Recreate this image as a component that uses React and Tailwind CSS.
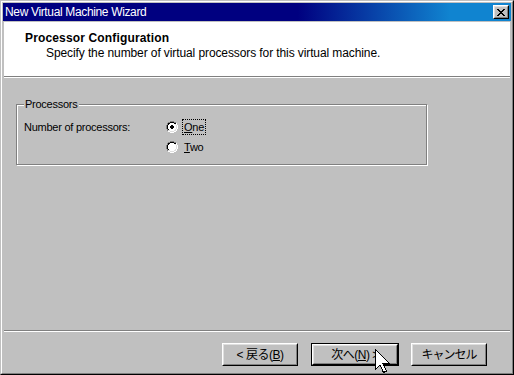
import React from "react";

function Pix({ rows, map, className = "" }) {
  const h = rows.length;
  const w = rows[0].length;
  const rects = [];
  for (let y = 0; y < h; y++) {
    for (let x = 0; x < w; x++) {
      const c = map[rows[y][x]];
      if (c) rects.push(<rect key={x + "-" + y} x={x} y={y} width={1} height={1} fill={c} />);
    }
  }
  return (
    <svg width={w} height={h} viewBox={`0 0 ${w} ${h}`} shapeRendering="crispEdges" className={className}>
      {rects}
    </svg>
  );
}

const RADIO_OFF = [
  "....GGGG....",
  "..GGKKKKGG..",
  ".GKKwwwwKKW.",
  ".GKwwwwwwLW.",
  "GKwwwwwwwwLW",
  "GKwwwwwwwwLW",
  "GKwwwwwwwwLW",
  "GKwwwwwwwwLW",
  ".GKwwwwwwLW.",
  ".GLLwwwwLLW.",
  "..WWLLLLWW..",
  "....WWWW....",
];
const RADIO_ON = [
  "....GGGG....",
  "..GGKKKKGG..",
  ".GKKwwwwKKW.",
  ".GKwwwwwwLW.",
  "GKwwwKKwwwLW",
  "GKwwKKKKwwLW",
  "GKwwKKKKwwLW",
  "GKwwwKKwwwLW",
  ".GKwwwwwwLW.",
  ".GLLwwwwLLW.",
  "..WWLLLLWW..",
  "....WWWW....",
];
const RADIO_MAP = { G: "#808080", K: "#000000", W: "#ffffff", L: "#dfdfdf", w: "#ffffff" };

const CLOSE_X = [
  "KK....KK",
  ".KK..KK.",
  "..KKKK..",
  "...KK...",
  "..KKKK..",
  ".KK..KK.",
  "KK....KK",
];

function Raised({ className = "", children }) {
  return (
    <div className={"border border-t-white border-l-white border-r-black border-b-black " + className}>
      <div className="h-full w-full border border-t-[#dfdfdf] border-l-[#dfdfdf] border-r-[#808080] border-b-[#808080] flex items-center justify-center">
        {children}
      </div>
    </div>
  );
}

function Btn({ children, def, className = "" }) {
  if (def) {
    return (
      <div className={"border border-black " + className}>
        <Raised className="h-full w-full">{children}</Raised>
      </div>
    );
  }
  return <Raised className={className}>{children}</Raised>;
}

function Etched() {
  return <div className="h-[2px] shrink-0 border-t border-t-[#808080] border-b border-b-white" />;
}

export default function App() {
  return (
    <div className="relative w-[514px] h-[375px] overflow-hidden bg-[#c0c0c0] [font-family:'Liberation_Sans','Noto_Sans_CJK_JP',Arial,sans-serif] text-black">
      <div className="h-full w-full border border-t-[#c0c0c0] border-l-[#c0c0c0] border-r-black border-b-black">
        <div className="h-full w-full border border-t-white border-l-white border-r-[#808080] border-b-[#808080] p-[1px] flex flex-col">
          {/* Title bar */}
          <div className="h-[18px] shrink-0 flex items-center justify-between pl-[2px] pr-[2px] bg-[linear-gradient(90deg,#000080_0%,#000080_58%,#1084d0_88%,#1084d0_100%)]">
            <span className="text-white text-[12px] leading-[18px] tracking-[-0.35px] whitespace-nowrap">
              New Virtual Machine Wizard
            </span>
            <Raised className="w-[16px] h-[14px] bg-[#c0c0c0]">
              <Pix rows={CLOSE_X} map={{ K: "#000" }} />
            </Raised>
          </div>

          {/* Client area */}
          <div className="flex-1 mx-[1px] mt-[1px] flex flex-col">
            {/* Header */}
            <div className="h-[54px] shrink-0 bg-white pt-[9px] pl-[21px]">
              <div className="text-[12px] leading-[14px] font-bold tracking-[0.15px] whitespace-nowrap">
                Processor Configuration
              </div>
              <div className="text-[12px] leading-[14px] pl-[21px] mt-[1px] tracking-[-0.1px] whitespace-nowrap">
                Specify the number of virtual processors for this virtual machine.
              </div>
            </div>
            <Etched />

            {/* Body */}
            <div className="flex-1 pt-[26px] pl-[12px]">
              <div className="relative w-[411px] h-[61px] border border-[#808080] shadow-[inset_1px_1px_0_#fff,1px_1px_0_#fff] pt-[15px] pl-[7px]">
                <span className="absolute -top-[8px] left-[7px] bg-[#c0c0c0] px-[1px] text-[11px] leading-[14px] tracking-[-0.25px] whitespace-nowrap">
                  Processors
                </span>
                <div className="flex text-[11px] leading-[14px] tracking-[-0.25px]">
                  <div className="w-[142px] shrink-0 whitespace-nowrap">Number of processors:</div>
                  <div className="flex flex-col gap-[6px]">
                    <div className="h-[14px] flex items-center">
                      <Pix rows={RADIO_ON} map={RADIO_MAP} />
                      <span className="ml-[4px] h-[16px] leading-[14px] border border-dotted border-black px-[1px]">
                        <span className="underline">O</span>ne
                      </span>
                    </div>
                    <div className="h-[14px] flex items-center">
                      <Pix rows={RADIO_OFF} map={RADIO_MAP} />
                      <span className="ml-[5px] h-[14px] leading-[14px] px-[1px]">
                        <span className="underline">T</span>wo
                      </span>
                    </div>
                  </div>
                </div>
              </div>
            </div>

            <Etched />

            {/* Footer */}
            <div className="h-[40px] shrink-0 flex items-start pt-[11px] pl-[218px]">
              <Btn className="w-[76px] h-[23px]">
                <span className="text-[12px] leading-[14px] tracking-[-0.5px] whitespace-nowrap">
                  &lt; 戻る(<span className="underline">B</span>)
                </span>
              </Btn>
              <Btn def className="w-[88px] h-[23px] ml-[13px]">
                <span className="text-[12px] leading-[14px] tracking-[-0.5px] whitespace-nowrap">
                  次へ(<span className="underline">N</span>) &gt;
                </span>
              </Btn>
              <Btn className="w-[76px] h-[23px] ml-[12px]">
                <span className="text-[12px] leading-[14px] tracking-[-1px] whitespace-nowrap">キャンセル</span>
              </Btn>
            </div>
          </div>
        </div>
      </div>

      {/* Mouse cursor */}
      <svg
        className="absolute left-[375px] top-[349px]"
        width="16"
        height="25"
        viewBox="0 0 16 25"
        shapeRendering="crispEdges"
      >
        <polygon
          points="0.5,0.5 0.5,20.5 5,16 8.5,23.5 11.5,22 8,14.5 14.5,14.5"
          fill="#ffffff"
          stroke="#000000"
          strokeWidth="1"
          strokeLinejoin="miter"
        />
      </svg>
    </div>
  );
}
